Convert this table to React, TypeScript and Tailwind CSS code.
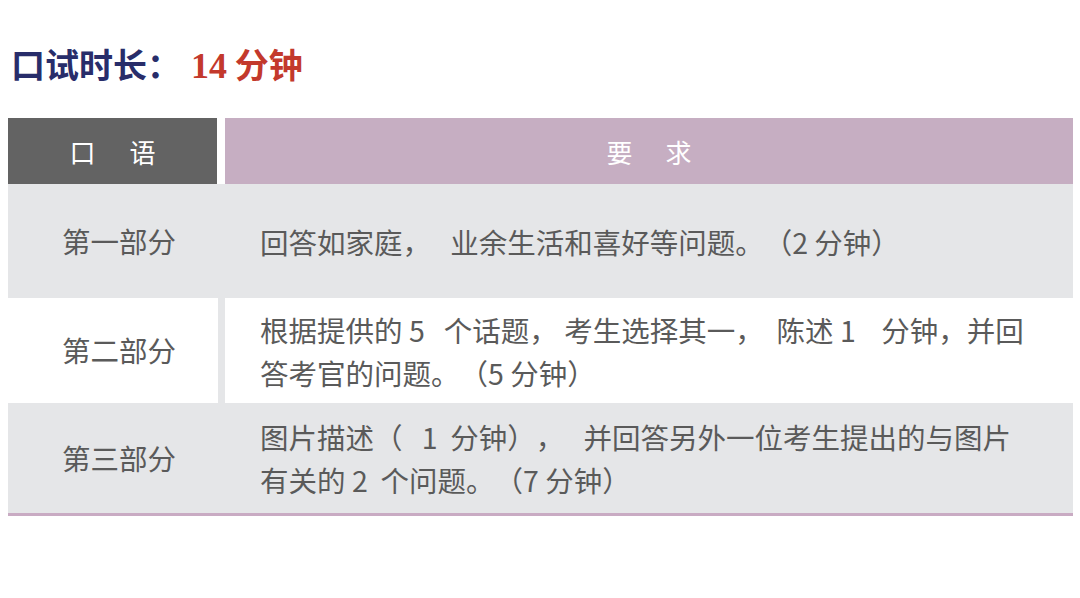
const cjk = { fontFamily: '"Noto Sans CJK SC", "Noto Sans", sans-serif' };

const rows = [
  {
    label: "第一部分",
    lines: ["回答如家庭，   业余生活和喜好等问题。（2 分钟）"],
    shaded: true,
    height: "h-[114px]",
  },
  {
    label: "第二部分",
    lines: ["根据提供的 5   个话题， 考生选择其一，  陈述 1    分钟，并回", "答考官的问题。（5 分钟）"],
    shaded: false,
    height: "h-[105px]",
  },
  {
    label: "第三部分",
    lines: ["图片描述（   1  分钟），   并回答另外一位考生提出的与图片", "有关的 2  个问题。（7 分钟）"],
    shaded: true,
    height: "h-[110px]",
  },
];

export default function App() {
  return (
    <div className="w-[1080px] h-[598px] bg-white overflow-hidden [text-spacing-trim:space-all]" style={cjk}>
      {/* Title */}
      <div className="pt-[44px] pl-[11px] h-[118px]">
        <h1 className="text-[34px] leading-[40px] font-bold text-[#282d6a] whitespace-pre">
          口试时长：
          <span className="text-[#c3392c]">
            <span className="ml-[10px] text-[36px]" style={{ fontFamily: '"Liberation Serif", serif' }}>14</span>
            {" "}分钟
          </span>
        </h1>
      </div>

      {/* Table */}
      <div className="ml-[8px] w-[1065px]">
        <div className="flex h-[66px] text-white text-[26px]">
          <div className="w-[209px] bg-[#636363] flex items-center justify-center gap-[34px]">
            <span>口</span>
            <span>语</span>
          </div>
          <div className="w-[8px] bg-white" />
          <div className="flex-1 bg-[#c6aec2] flex items-center justify-center gap-[33px]">
            <span>要</span>
            <span>求</span>
          </div>
        </div>

        {rows.map((row) => (
          <div
            key={row.label}
            className={`flex ${row.height} text-[28.5px] text-[#5a5a5a] ${row.shaded ? "bg-[#e5e6e8]" : "bg-white"}`}
          >
            <div className="w-[210px] pl-[12px] flex items-center justify-center">{row.label}</div>
            <div className="w-[7px] bg-[#e5e6e8]" />
            <div className="flex-1 pl-[35px] flex flex-col justify-center leading-[43px] whitespace-pre">
              {row.lines.map((line) => (
                <div key={line}>{line}</div>
              ))}
            </div>
          </div>
        ))}
        <div className="h-[3px] bg-[#c9abc3]" />
      </div>
    </div>
  );
}
